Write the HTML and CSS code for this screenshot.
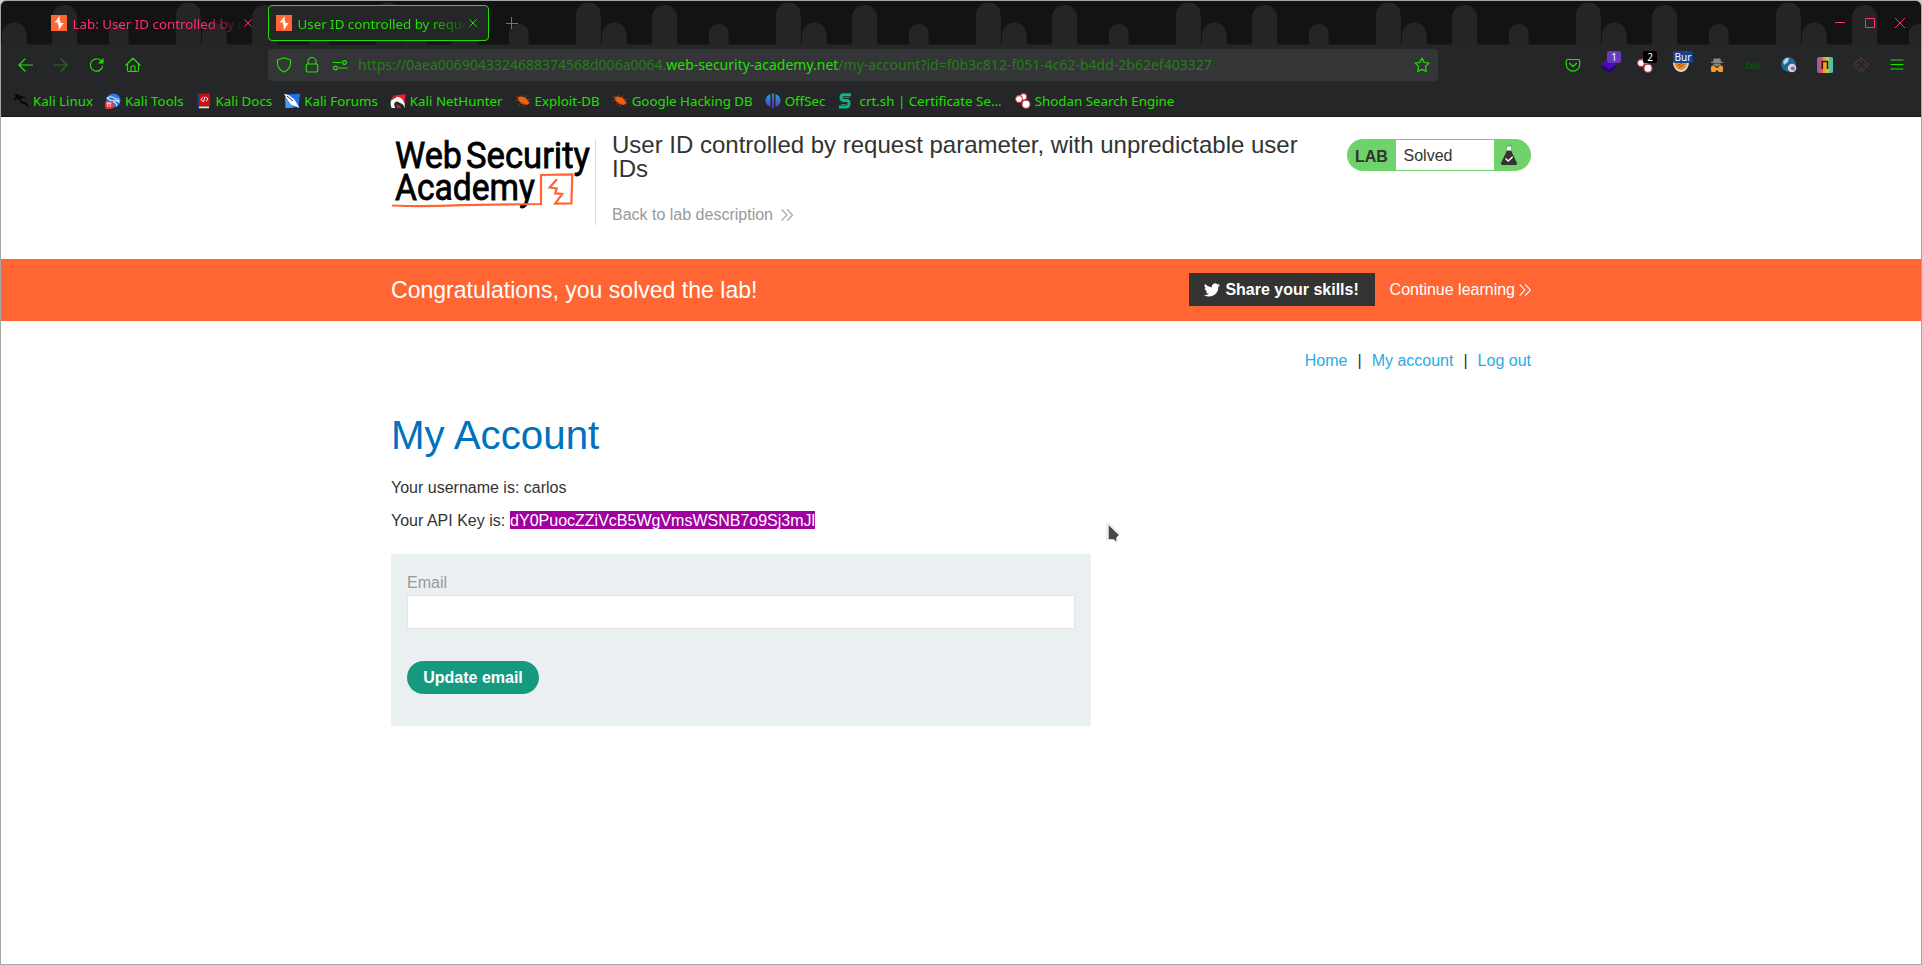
FILE: index.html
```html
<!DOCTYPE html>
<html lang="en">
<head>
<meta charset="utf-8">
<title>User ID controlled by request parameter</title>
<link rel="stylesheet" href="styles.css">
</head>
<body>
<svg width="0" height="0" class="defs" aria-hidden="true">
  <defs>
    <symbol id="burp" viewBox="0 0 16 16"><rect width="16" height="16" fill="#ff6633"/><path d="M8.600 1L3.600 7.600h3.700L6.400 9l1.300 1v5l5-6.900H8.900l.9-1.600-1.200-1z" fill="#fff"/></symbol>
    <symbol id="cross" viewBox="0 0 8 8"><path d="M.3.3l7.400 7.400M7.700.3L.3 7.700" fill="none" stroke="currentColor"/></symbol>
    <symbol id="bug" viewBox="0 0 16 16"><path d="M2.500 4l3.500-.6 4 1.200 3.200 3 1 3-2.500 1.500-4-1-3.900-3z" fill="#f06010"/><path d="M4 5L.8 3.200M5 7L.5 7.300M6.500 9.500l-3 2.500M9 10l-2 3.500M7 4L6 1.500M10 5l1-3M12 7l3.300-.6M12.500 9l3 .5" stroke="#b9480f" stroke-width=".7" fill="none"/></symbol>
    <symbol id="shodan" viewBox="0 0 16 16"><g fill="#fff" stroke="#c8444c" stroke-width="1.100"><circle cx="8.500" cy="3.800" r="3.200"/><circle cx="4" cy="6" r="3.400"/><circle cx="11" cy="11.200" r="4"/></g></symbol>
    <symbol id="chev" viewBox="0 0 12 12"><path d="M.6.4L5.800 6 .6 11.600M6.200.4L11.400 6l-5.200 5.600" fill="none" stroke="currentColor" stroke-width="1.100"/></symbol>
  </defs>
</svg>
<div class="window">
  <div class="tabstrip">
    <svg class="arches" width="1920" height="44">
      <defs><pattern id="arch" x="-1" y="-1" width="200" height="45" patternUnits="userSpaceOnUse">
        <g fill="#252525">
          <path d="M0 45V15h1V45zM176 45V15a12.500 12.500 0 0 1 25 0V45z"/>
          <path d="M2 45V35a12.300 12.300 0 0 1 24.600 0c0 5 .4 8 1.200 10z"/>
          <path d="M51 45c1-3 1.200-5 1.200-8V17.500a12.500 12.500 0 0 1 25 0V45z"/>
          <path d="M109 45V32a10 10 0 0 1 19.600 0V45z"/>
        </g></pattern></defs>
      <rect width="1920" height="44" fill="url(#arch)"/>
    </svg>
    <div class="tab idle"><svg width="16" height="16"><use href="#burp"/></svg><span class="label">Lab: User ID controlled by requ</span><svg class="x" width="8" height="8"><use href="#cross"/></svg></div>
    <div class="tab active"><svg width="16" height="16"><use href="#burp"/></svg><span class="label">User ID controlled by request</span><svg class="x" width="8" height="8"><use href="#cross"/></svg></div>
    <svg class="plus" width="12" height="12" viewBox="0 0 12 12"><path d="M5.500 0v12M0 6.500h12" stroke="currentColor"/></svg>
    <div class="winbtns">
      <svg width="10" height="10"><path d="M0 4.500h10" stroke="currentColor"/></svg>
      <svg width="10" height="10"><path d="M.5.5h9v9h-9z" fill="none" stroke="currentColor"/></svg>
      <svg width="10" height="10"><path d="M0 0l10 10M10 0L0 10" stroke="currentColor"/></svg>
    </div>
  </div>
  <div class="navbar">
    <div class="slots left">
      <span><svg width="16" height="16" viewBox="0 0 16 16"><path d="M8 2L2 8l6 6M2 8h13.500" class="ln"/></svg></span>
      <span class="dim"><svg width="16" height="16" viewBox="0 0 16 16"><path d="M8 2l6 6-6 6M14 8H.5" class="ln"/></svg></span>
      <span><svg width="16" height="16" viewBox="0 0 16 16"><path d="M13.700 9A6.200 6.200 0 1 1 12 3.600" class="ln"/><path d="M14.500 1v5.500H9z" fill="currentColor"/></svg></span>
      <span><svg width="16" height="16" viewBox="0 0 16 16"><path d="M1 8l7-6.800L15 8M2.500 7v6.300q0 1.200 1.200 1.200h8.600q1.200 0 1.200-1.200V7M6 14.500v-4.200q0-1.300 1.300-1.300h1.400q1.300 0 1.300 1.300v4.200" class="ln"/></svg></span>
    </div>
    <div class="urlbar">
      <div class="slots small">
        <span><svg width="16" height="16" viewBox="0 0 16 16"><path d="M8 .8L14.500 3v3c0 4.500-3 7.500-6.500 9-3.500-1.500-6.500-4.500-6.500-9V3z" class="ln"/></svg></span>
        <span><svg width="16" height="16" viewBox="0 0 16 16"><path d="M4 7V4.500a4 4 0 0 1 8 0V7M3.500 7h9q1.200 0 1.200 1.200v5.600q0 1.200-1.200 1.200h-9q-1.200 0-1.200-1.200V8.200Q2.300 7 3.500 7z" class="ln"/></svg></span>
        <span><svg width="16" height="16" viewBox="0 0 16 16"><path d="M1 5.500h8M7 11h8" class="ln"/><circle cx="12.500" cy="5.500" r="1.900" class="ln"/><circle cx="3.500" cy="11" r="1.900" class="ln"/></svg></span>
      </div>
      <div class="url">https://0aea0069043324688374568d006a0064.<b>web-security-academy.net</b>/my-account?id=f0b3c812-f051-4c62-b4dd-2b62ef403327</div>
      <svg class="star" width="16" height="16" viewBox="0 0 16 16"><path d="M8 1l2.100 4.500 4.900.6-3.600 3.300.9 5.100L8 12.400l-4.300 2.100.9-5.100L1 6.100l4.900-.6z" class="ln"/></svg>
    </div>
    <div class="slots ext">
      <span><svg width="16" height="16" viewBox="0 0 16 16"><path d="M3 2.500h10q1.800 0 1.800 1.800v3A6.800 6.800 0 0 1 1.200 7.300v-3Q1.200 2.500 3 2.500zM4.500 6.300L8 9.500l3.500-3.200" class="ln"/></svg></span>
      <span><svg width="18" height="18" viewBox="0 0 18 18"><path d="M1 11l8-4 8 4-8 6z" fill="#220a68"/><path d="M1 8l8-5 8 5-8 5.500z" fill="#4a0bb5"/></svg><i class="badge purple">1</i></span>
      <span><svg width="16" height="16"><use href="#shodan"/></svg><i class="badge black">2</i></span>
      <span><svg width="16" height="16" viewBox="0 0 16 16"><path d="M0 5h16c0 6-4 10-8 10S0 11 0 5z" fill="#dfd7cc"/><path d="M1.500 5h12.500c0 5-3 8-6 8S1.500 10 1.500 5z" fill="#ee8b2d"/><path d="M4 9l5-3M6 11l5-4" stroke="#8c4b16"/></svg><i class="badge blue">Bur</i></span>
      <span><svg width="16" height="16" viewBox="0 0 16 16"><path d="M4.500 2l2-1L8 2l1.500-1 2 1 .6 2.700H14V6H2V4.700h1.900zM4.500 6.500h7V8L8 9.800 4.500 8z" fill="#858585"/><path d="M2.500 9l2-.8L8 11.200l3.500-3 2 .8 1 3.500-1 .5.500 2h-4l-2-2-2 2H2l.5-2-1-.5z" fill="#f29a2e"/></svg></span>
      <span class="bw">bw</span>
      <span><svg width="16" height="16" viewBox="0 0 16 16"><circle cx="7.500" cy="7.500" r="7.300" fill="#23668e"/><path d="M2 5a5 5 0 0 1 6-4L7 5 3 8z" fill="#a8d8ee"/><circle cx="11" cy="11" r="4.300" fill="#d9cfe2"/><circle cx="11.800" cy="11.500" r="2" fill="#8c6c9c"/></svg></span>
      <span><svg width="16" height="16" viewBox="0 0 16 16"><rect width="16" height="16" rx="2" fill="#8d60b4"/><path d="M3 0h3v16H3z" fill="#e2535d"/><path d="M6 0h3v16H6z" fill="#f59b35"/><path d="M9 0h3v16H9z" fill="#b9ce3f"/><path d="M12 0h2q2 0 2 2v12q0 2-2 2h-2z" fill="#4fc3ae"/><path d="M5.300 12V4.500h5.200V12" fill="none" stroke="#2a1a12" stroke-width="1.600"/></svg></span>
      <span><svg width="16" height="16" viewBox="0 0 16 16"><path d="M8 .5L15.500 8 8 15.500.5 8z" fill="none" stroke="#6b4331" stroke-width=".9"/><path d="M7.500 3.500h1v2h-1zM7.500 10.500h1v2h-1zM3.500 7.500h2v1h-2zM10.500 7.500h2v1h-2z" fill="#76452f"/></svg></span>
      <span><svg width="14" height="12" viewBox="0 0 14 12"><path d="M1 1h12M1 5.500h12M1 10h12" class="ln"/></svg></span>
    </div>
  </div>
  <div class="bookmarks">
    <a><svg width="16" height="16" viewBox="0 0 16 16"><path d="M0 1q5-.5 8 2.200 3.500-.4 5.500 2.800l-3-1.200q-3.200.2-2.900 2.400.8 1.500 4 1.700Q15.300 9.800 16 15q-2-3.600-4.600-4Q6.500 10.500 6.200 6.600 4 4.200.5 4l3-.7Q2.500 2 0 1zM.5 6.500Q3 4.800 6 5.200L2 7.200z" fill="#050505"/></svg>Kali Linux</a>
    <a><svg width="16" height="16" viewBox="0 0 16 16"><circle cx="8.500" cy="7.500" r="7" fill="#2b7ae6"/><path d="M2 5q6-3 8 1 4-1 4 3-3-2-5-1-4 0-7-3zM8 9q3 0 4 4" fill="none" stroke="#d8e9ff" stroke-width="1.100"/><rect y="8" width="8" height="8" rx="2" fill="#e83232"/><path d="M1.500 10h5M2.800 10v4M5.200 10v4" stroke="#fff" stroke-width=".9"/></svg>Kali Tools</a>
    <a><svg width="16" height="16" viewBox="0 0 16 16"><path d="M1.500.5h2v15h-2z" fill="#123b78"/><path d="M3 .5h11v13H3z" fill="#d00b12"/><path d="M3 13.500h10v1.800H3z" fill="#e9e2e2"/><path d="M7 4.500L4.700 6.600 7 8.500M10 4l2 2-2 2.500M9 3.500L7.500 9" stroke="#fff" fill="none"/></svg>Kali Docs</a>
    <a><svg width="16" height="16" viewBox="0 0 16 16"><path d="M2 1.500L16 .8 14.500 14 2 15z" fill="#1f74ee"/><path d="M1 3.500L10 14.500l-8.500.7z" fill="#4d9be8"/><path d="M0 .8l5 1.400 5.800 4.600 1.600 3L15.500 15 10 12.700 7 11.500 3 6z" fill="#fff"/><path d="M3 3l6 5" stroke="#122c46"/></svg>Kali Forums</a>
    <a><svg width="16" height="16" viewBox="0 0 16 16"><path d="M4 2.500L15.500 1 14.500 11z" fill="#e9222c"/><path d="M1.500 15Q-1.500 6.500 5 4q6-1.500 9.500 6l.5 5q-2-4.500-5-5-3-2.800-5-.5-1.800 2.500.5 5.500z" fill="#f6f6f6"/><path d="M2 4l3-1.500L7 4 2 7zM6 11.500q3-.5 5.500 3.500H7.500z" fill="#c9202d"/></svg>Kali NetHunter</a>
    <a><svg width="16" height="16"><use href="#bug"/></svg>Exploit-DB</a>
    <a><svg width="16" height="16"><use href="#bug"/></svg>Google Hacking DB</a>
    <a><svg width="16" height="16" viewBox="0 0 16 16"><defs><linearGradient id="off" x2="0" y2="1"><stop stop-color="#21a7c9"/><stop offset="1" stop-color="#5a30cf"/></linearGradient></defs><path d="M5.500 1v13Q.5 12 .5 7.500T5.500 1zM10.500 1v13q5-2 5-6.500T10.500 1zM7.200.5h1.600v15H7.200z" fill="url(#off)"/></svg>OffSec</a>
    <a class="crt"><svg width="16" height="16" viewBox="0 0 16 16"><path d="M13 1.800H5.500Q3 1.800 3 4.500T5.500 7.500H9q2 0 2 3.200T8 14H1" fill="none" stroke="#12b287" stroke-width="3"/><path d="M5 4.500h6.500M3 11.500h5" stroke="#0c8f6c"/></svg>crt.sh | Certificate Se...</a>
    <a><svg width="16" height="16"><use href="#shodan"/></svg>Shodan Search Engine</a>
  </div>
  <main>
    <header class="labhead container">
      <svg class="logo" width="204" height="86" viewBox="391 139 204 86">
        <g font-family="Roboto, sans-serif" font-weight="400" font-size="37" fill="#000" stroke="#000" stroke-width=".8">
          <text x="395" y="167.500" textLength="67" lengthAdjust="spacingAndGlyphs">Web</text>
          <text x="466" y="167.500" textLength="124" lengthAdjust="spacingAndGlyphs">Security</text>
          <text x="395" y="200" textLength="140" lengthAdjust="spacingAndGlyphs">Academy</text>
        </g>
        <path d="M392 205.500q30 1.500 70-.4l79-1.100V175l31.300-.6-.9 29-16.200.2 7-9.600-7-.6 1.500-5-7-.9 7.200-8.300" fill="none" stroke="#ff6633" stroke-width="2.200"/>
      </svg>
      <div class="title">
        <h2>User ID controlled by request parameter, with unpredictable user IDs</h2>
        <a class="back">Back to lab description <svg width="12" height="12"><use href="#chev"/></svg></a>
      </div>
      <div class="status"><b>LAB</b><span>Solved</span><svg width="16" height="20" viewBox="0 0 16 20"><path d="M5 1h6" stroke="#777"/><path d="M6 1.500h4V7H6z" fill="#fff"/><path d="M6 5.500h4L16 18q.3 2-1.500 2h-13Q-.3 20 0 18z" fill="#333332"/><path d="M4.500 13.500L7.200 16l4.500-4.300" fill="none" stroke="#fff" stroke-width="1.300"/></svg></div>
    </header>
    <section class="banner"><div class="container">
      <p>Congratulations, you solved the lab!</p>
      <a class="share"><svg width="16" height="14" viewBox="0 0 24 20"><path d="M24 2.400a10 10 0 0 1-2.800.8A5 5 0 0 0 23.300.5a10 10 0 0 1-3.100 1.200 4.900 4.900 0 0 0-8.400 4.500A14 14 0 0 1 1.700 1.100a4.900 4.900 0 0 0 1.500 6.600 5 5 0 0 1-2.200-.6 4.900 4.900 0 0 0 3.900 4.900 5 5 0 0 1-2.200.1 4.900 4.900 0 0 0 4.600 3.400A10 10 0 0 1 0 17.500 14 14 0 0 0 21.500 5a10 10 0 0 0 2.500-2.600z" fill="#fff"/></svg>Share your skills!</a>
      <a class="continue">Continue learning <svg width="12" height="12"><use href="#chev"/></svg></a>
    </div></section>
    <nav class="links container"><a>Home</a><i>|</i><a>My account</a><i>|</i><a>Log out</a></nav>
    <section class="account container">
      <h1>My Account</h1>
      <p>Your username is: carlos</p>
      <p>Your API Key is: <mark>dY0PuocZZiVcB5WgVmsWSNB7o9Sj3mJl</mark></p>
      <form>
        <label for="email">Email</label>
        <input id="email" type="email">
        <button type="button">Update email</button>
      </form>
    </section>
  </main>
</div>
<svg class="cursor" width="16" height="22" viewBox="0 0 16 22"><path d="M2 1.500V18h5.500l2 2.200 1.500-.7v-3.500L13.800 13z" fill="#474747" stroke="#fff" stroke-width="1.400"/><path d="M1 1v18M12 18l-3 3M14.500 13L2 .8" stroke="#bbb" stroke-width=".5"/></svg>
</body>
</html>
```
FILE: styles.css
```css
* { box-sizing: border-box; }
html { background: #cfd3cf; }
body { margin: 0; width: 1922px; height: 965px; overflow: hidden; font: 16px "Liberation Sans", sans-serif; color: #333332; }
.defs { position: absolute; }
svg { flex: none; display: block; }
.window { width: 1922px; height: 965px; border: 1px solid #a3a6a3; border-radius: 6px 6px 0 0; overflow: hidden; background: #fff; display: flex; flex-direction: column; }

/* browser chrome */
.tabstrip { height: 44px; flex: none; background: #131313; border-bottom: 1px solid #1b1b1b; position: relative; display: flex; align-items: flex-start; padding-left: 41px; font: 13.33px "Noto Sans", sans-serif; color: #ff2f70; }
.arches { position: absolute; left: 0; top: 0; }
.tab { position: relative; display: flex; align-items: center; height: 36px; margin-top: 4px; }
.idle { width: 226px; padding: 0 16px 0 9px; }
.active { width: 221px; padding: 0 11px 0 7px; border: 1px solid #20e000; border-radius: 4px; background: #252628; color: #20e000; }
.label { flex: 1; margin-left: 5.5px; padding-top: 1px; overflow: hidden; white-space: nowrap; -webkit-mask-image: linear-gradient(90deg, #000 calc(100% - 40px), transparent); mask-image: linear-gradient(90deg, #000 calc(100% - 40px), transparent); }
.plus { position: relative; margin: 16px 0 0 17px; }
.winbtns { position: relative; margin: 17px 16px 0 auto; display: flex; gap: 20px; }
.navbar { height: 40px; flex: none; background: #252628; display: flex; align-items: center; padding-left: 6px; color: #20e000; }
.ln { fill: none; stroke: currentColor; stroke-width: 1.2; stroke-linecap: round; stroke-linejoin: round; }
.slots { display: flex; align-items: center; }
.slots span { width: 36px; height: 32px; display: flex; align-items: center; justify-content: center; position: relative; }
.slots .dim { opacity: .4; }
.left { width: 261px; }
.small span { width: 28px; }
.urlbar { width: 1170px; height: 32px; background: #343537; border-radius: 4px; display: flex; align-items: center; padding: 0 8px 0 2px; }
.url { margin-left: 4px; padding-bottom: 1px; font: 14px "Noto Sans", sans-serif; color: #257d18; white-space: nowrap; }
.url b { font-weight: 400; color: #20e000; }
.star { margin-left: auto; }
.ext { margin-left: 117px; }
.badge { position: absolute; left: 16px; top: 2px; width: 14px; height: 12px; border-radius: 2px; font: 10px/12px "Noto Sans", sans-serif; color: #fff; text-align: center; }
.purple { background: #6938bd; }
.black { background: #000; }
.blue { background: #16418f; left: 10px; width: 20px; }
.slots .bw { font: 700 11px "DejaVu Sans", sans-serif; letter-spacing: -1px; color: #0e4a0b; }
.bookmarks { height: 32px; flex: none; background: #252628; border-bottom: 1px solid #151515; display: flex; align-items: center; gap: 12px; padding: 0 0 0 12px; font: 13.33px "Noto Sans", sans-serif; color: #20e000; }
.bookmarks a { display: flex; align-items: center; gap: 4px; white-space: nowrap; }
.bookmarks .crt { gap: 6px; margin-right: 1px; }

/* lab page */
.container { width: 1140px; margin: 0 auto; }
.labhead { height: 142px; display: flex; align-items: flex-start; padding-top: 22px; }
.logo { width: 204px; }
.title { border-left: 1px solid #ddd; height: 86px; width: 720px; padding-left: 16px; }
h2 { margin: -6px 0 24px; font-size: 24px; line-height: 24px; font-weight: 400; }
.back { display: flex; align-items: center; gap: 8px; line-height: 20px; color: #999; }
.status { margin-left: auto; width: 184px; height: 32px; border-radius: 16px; background: #6fd26b; display: flex; align-items: center; padding: 1px 14px 1px 8px; }
.status b { width: 41px; padding-top: 3px; }
.status span { width: 98px; height: 30px; background: #fff; padding-left: 7.5px; line-height: 31px; }
.status svg { margin-left: 7px; }
.banner { height: 62px; background: #ff6633; color: #fff; }
.banner .container { display: flex; align-items: center; height: 62px; }
.banner p { margin: 0 auto 0 0; font-size: 23.05px; }
.share { width: 186px; height: 33px; background: #333332; display: flex; align-items: center; justify-content: center; gap: 5px; font-weight: 700; margin: 0 15px 1px 0; padding-top: 1px; }
.continue { display: flex; align-items: center; gap: 4px; }
.links { display: flex; justify-content: flex-end; gap: 10px; padding-top: 30px; line-height: 20px; color: #29abe2; }
.links i { font-style: normal; color: #333332; }
.account h1 { margin: 42px 0 19px; font-size: 40.3px; line-height: 46px; font-weight: 400; color: #0071bd; }
.account p { margin: 0 0 13px; line-height: 20px; }
mark { background: #a000a0; color: #fff; padding-top: 1px; margin-left: .5px; }
form { width: 700px; height: 172px; margin-top: 23px; padding: 19px 16px; background: #eaeff2; display: flex; flex-direction: column; align-items: flex-start; }
label { color: #999; line-height: 20px; }
input { width: 668px; height: 34px; margin: 2px 0 32px; border: 1px solid #e3e3e0; background: #fff; }
button { width: 132px; height: 33px; padding: 0; border: 0; border-radius: 17px; background: #159a80; color: #fff; font: 700 16px "Liberation Sans", sans-serif; }
.cursor { position: absolute; left: 1106px; top: 522px; }
```
